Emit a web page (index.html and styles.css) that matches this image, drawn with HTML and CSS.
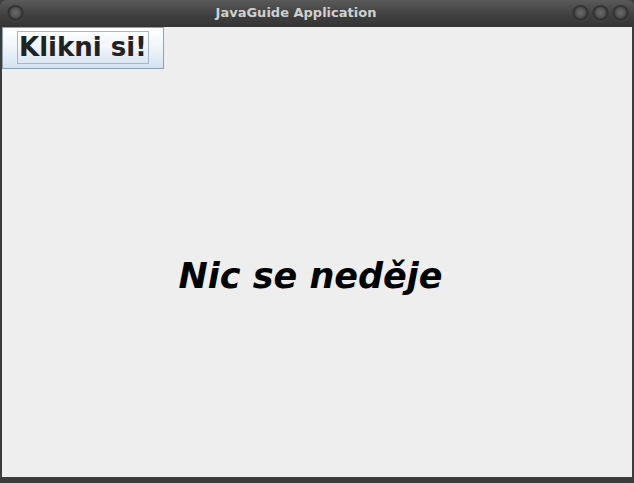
FILE: index.html
```html
<!DOCTYPE html>
<html>
<head>
<meta charset="utf-8">
<link rel="stylesheet" href="styles.css">
</head>
<body>
<div class="window">
  <div class="titlebar">
    <div class="tb-left"><span class="knob"></span></div>
    <div class="title">JavaGuide Application</div>
    <div class="tb-right"><span class="knob"></span><span class="knob"></span><span class="knob"></span></div>
  </div>
  <div class="content">
    <div class="north">
      <button class="btn"><span class="focus">Klikni si!</span></button>
    </div>
    <div class="center">
      <div class="label">Nic se neděje</div>
    </div>
  </div>
</div>
</body>
</html>
```
FILE: styles.css
```css
html, body {
  margin: 0;
  padding: 0;
  width: 634px;
  height: 483px;
  overflow: hidden;
  background: #3a3a3a;
}
.window {
  width: 634px;
  height: 483px;
  display: flex;
  flex-direction: column;
  background: #3c3c3c;
  font-family: "DejaVu Sans", sans-serif;
}
.titlebar {
  height: 27px;
  flex: none;
  display: flex;
  align-items: center;
  background: linear-gradient(#5a5a5a, #3e3e3e 60%, #353535);
  border-radius: 6px 6px 0 0;
  position: relative;
}
.tb-left {
  padding-left: 7px;
  display: flex;
}
.tb-right {
  margin-left: auto;
  padding-right: 5px;
  display: flex;
  gap: 3px;
}
.knob {
  width: 17px;
  height: 17px;
  border-radius: 50%;
  box-sizing: border-box;
  background: radial-gradient(circle at 50% 45%, #6a6a6a 0, #555 35%, #2e2e2e 55%, #4a4a4a 75%, #5e5e5e 100%);
  display: block;
}
.title {
  position: absolute;
  left: 0;
  right: 0;
  top: 0;
  line-height: 26px;
  text-align: center;
  color: #d0d0d0;
  font-size: 13px;
  font-weight: bold;
  padding-right: 42px;
}
.content {
  flex: 1;
  margin: 0 2px 6px 2px;
  background: #eeeeee;
  display: flex;
  flex-direction: column;
}
.north {
  display: flex;
  height: 43px;
  flex: none;
}
.btn {
  width: 162px;
  height: 42px;
  margin: 0;
  padding: 0 0 1px 0;
  box-sizing: border-box;
  border: 1px solid #8ea0b4;
  background: linear-gradient(#ffffff, #f2f6fa 45%, #d4e2f0);
  display: flex;
  align-items: center;
  justify-content: center;
  font-family: "DejaVu Sans", sans-serif;
  font-weight: bold;
  font-size: 26px;
  color: #222222;
}
.focus {
  border: 1px solid #a4b8cc;
  padding: 0 1px;
  line-height: 31px;
}
.center {
  flex: 1;
  display: flex;
  align-items: center;
  justify-content: center;
  padding-right: 13px;
  padding-top: 4px;
}
.label {
  font-weight: bold;
  font-style: italic;
  font-size: 35px;
  color: #000;
}
```
